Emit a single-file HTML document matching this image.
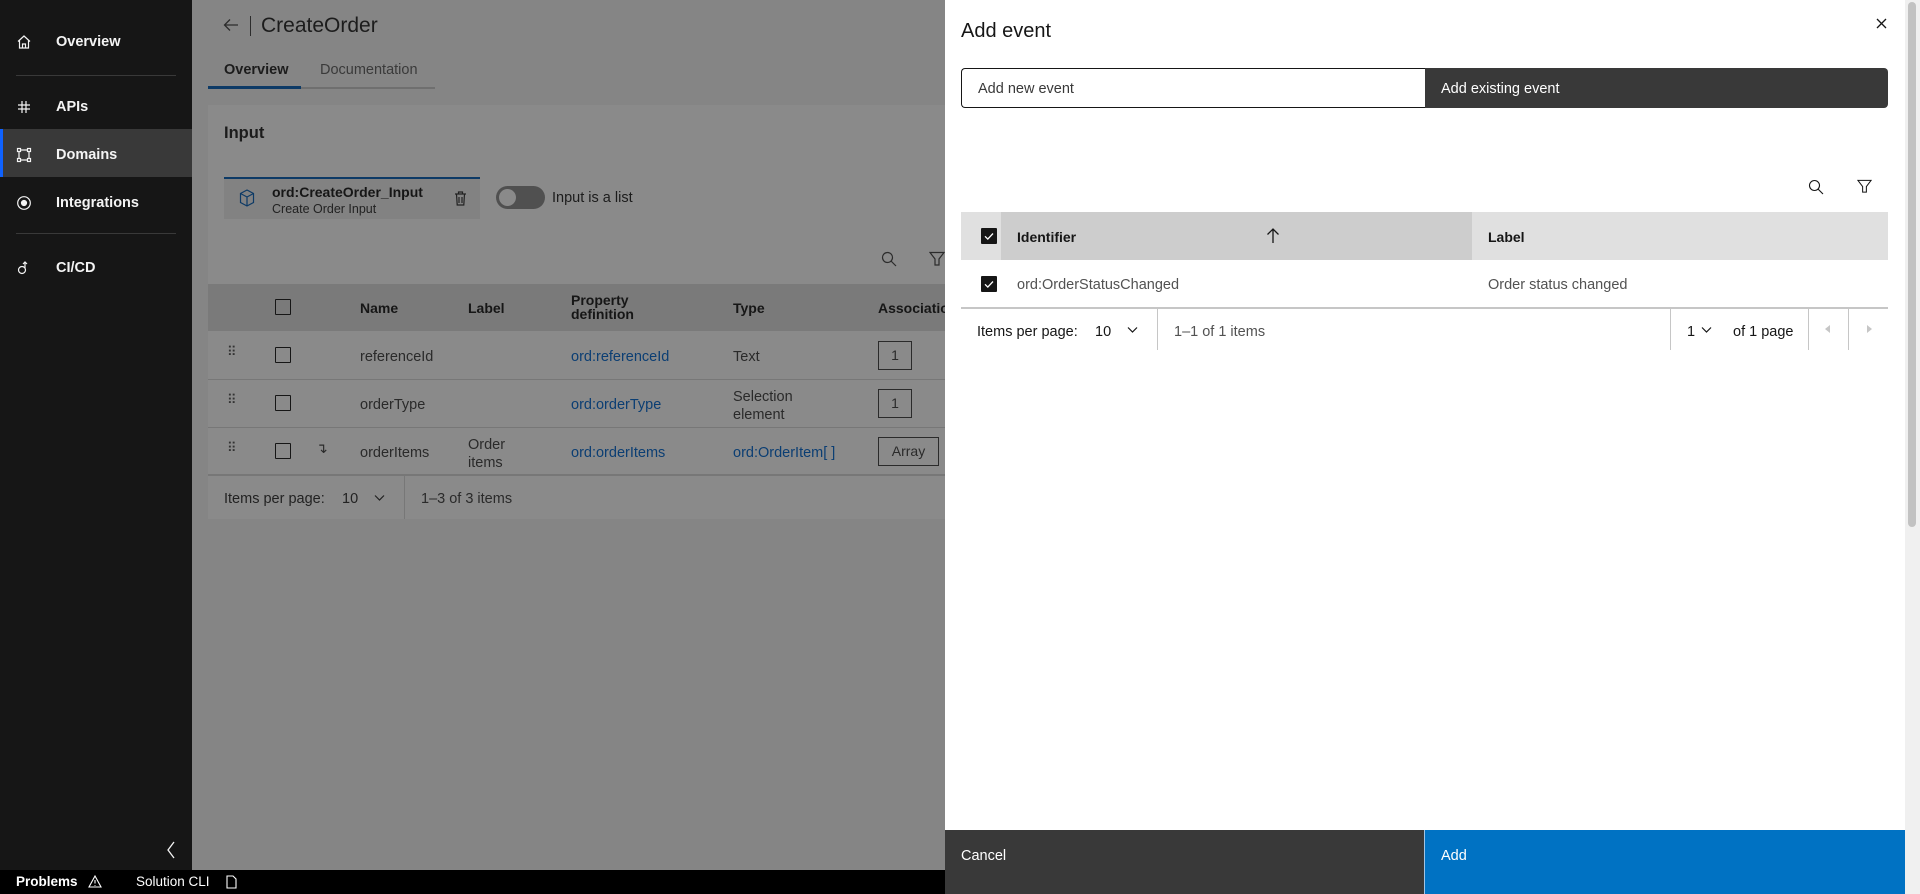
<!DOCTYPE html>
<html><head><meta charset="utf-8"><style>
*{box-sizing:border-box;margin:0;padding:0}
body{width:1920px;height:894px;overflow:hidden;font-family:"Liberation Sans",sans-serif;position:relative;background:#858585;color:#161616}
.abs{position:absolute}
.side{left:0;top:0;width:192px;height:870px;background:#161616;color:#f4f4f4}
.nav{position:absolute;left:0;width:192px;height:48px;display:flex;align-items:center;font-size:14.5px;font-weight:bold;padding-left:56px}
.nav svg{position:absolute;left:16px}
.div{position:absolute;left:16px;width:160px;height:1px;background:#393939}
.t{position:absolute;white-space:nowrap}
.status{left:0;top:870px;width:945px;height:24px;background:#000;color:#fff;font-size:13.5px}
.cb{position:absolute;width:16px;height:16px;border:1.5px solid #161616;border-radius:1px}
.cbk{position:absolute;width:16px;height:16px;background:#161616;border-radius:1px}
.link{color:#0b3e73}
.drawer{left:945px;top:0;width:960px;height:894px;background:#fff}
.vd{position:absolute;width:1px;background:#c6c6c6}
</style></head><body>
<div class="abs side">
 <div class="nav" style="top:18px"><svg width="16" height="16" viewBox="0 0 16 16" fill="none" stroke="#f4f4f4" stroke-width="1.2"><path d="M2 7.5L8 2l6 5.5M3.5 6.5V14h9V6.5M6.5 14V10h3v4"/></svg>Overview</div>
 <div class="div" style="top:75px"></div>
 <div class="nav" style="top:83px"><svg width="16" height="16" viewBox="0 0 16 16" fill="none" stroke="#f4f4f4" stroke-width="1.2"><path d="M6 2v12M10 2v12M2 6h12M2 10h12"/></svg>APIs</div>
 <div class="nav" style="top:129px;background:#393939;border-left:3px solid #0f62fe;padding-left:53px;padding-top:3px"><svg width="16" height="16" viewBox="0 0 16 16" fill="none" stroke="#f4f4f4" stroke-width="1.2" style="left:13px"><rect x="1.5" y="1.5" width="3" height="3"/><rect x="11.5" y="1.5" width="3" height="3"/><rect x="1.5" y="11.5" width="3" height="3"/><rect x="11.5" y="11.5" width="3" height="3"/><path d="M4.5 3h7M4.5 13h7M3 4.5v7M13 4.5v7"/></svg>Domains</div>
 <div class="nav" style="top:179px"><svg width="16" height="16" viewBox="0 0 16 16" fill="none" stroke="#f4f4f4" stroke-width="1.2"><circle cx="8" cy="8" r="6.3"/><circle cx="8" cy="8" r="2.5" fill="#f4f4f4"/></svg>Integrations</div>
 <div class="div" style="top:233px"></div>
 <div class="nav" style="top:244px"><svg width="16" height="16" viewBox="0 0 16 16" fill="none" stroke="#f4f4f4" stroke-width="1.2"><circle cx="6" cy="10" r="3.5"/><path d="M9 8V2M7 4l2-2 2 2"/></svg>CI/CD</div>
 <svg class="abs" style="left:165px;top:841px" width="12" height="18" viewBox="0 0 12 18" fill="none" stroke="#f4f4f4" stroke-width="1.3"><path d="M9 1L3 9l6 8"/></svg>
</div>
<div class="abs status">
 <span class="t" style="left:16px;top:4px;font-weight:bold">Problems</span>
 <svg class="abs" style="left:88px;top:5px" width="14" height="13" viewBox="0 0 14 13" fill="none" stroke="#fff" stroke-width="1.1"><path d="M7 1L1 12h12z M7 5v3.5M7 10v.8"/></svg>
 <span class="t" style="left:136px;top:4px">Solution CLI</span>
 <svg class="abs" style="left:226px;top:5px" width="11" height="14" viewBox="0 0 11 14" fill="none" stroke="#fff" stroke-width="1.1"><path d="M1 1h6l3 3v9H1z"/></svg>
</div>
<svg class="abs" style="left:223px;top:18px" width="16" height="14" viewBox="0 0 16 14" fill="none" stroke="#2c2c2c" stroke-width="1.3"><path d="M15 7H2M7 1.5L1.5 7 7 12.5"/></svg>
<div class="abs" style="left:250px;top:16px;width:1px;height:20px;background:#2c2c2c"></div>
<div class="t" style="left:261px;top:14px;font-size:21px;color:#1c1c1c">CreateOrder</div>
<div class="t" style="left:224px;top:62px;font-size:14.5px;font-weight:bold;color:#1c1c1c">Overview</div>
<div class="t" style="left:320px;top:62px;font-size:14.5px;color:#3a3a3a">Documentation</div>
<div class="abs" style="left:208px;top:86px;width:93px;height:3px;background:#0d3a66"></div>
<div class="abs" style="left:301px;top:87px;width:134px;height:2px;background:#6f6f6f"></div>
<div class="abs" style="left:208px;top:105px;width:737px;height:414px;background:#8a8a8a"></div>
<div class="t" style="left:224px;top:124px;font-size:16.5px;font-weight:bold;color:#1c1c1c">Input</div>
<div class="abs" style="left:224px;top:177px;width:256px;height:42px;background:#828282;border-top:2px solid #0d3a66"></div>
<svg class="abs" style="left:239px;top:189px" width="16" height="18" viewBox="0 0 16 18" fill="none" stroke="#0d3a66" stroke-width="1.2"><path d="M8 1l6.5 3.5v9L8 17l-6.5-3.5v-9z M1.5 4.5L8 8l6.5-3.5M8 8v9"/></svg>
<div class="t" style="left:272px;top:184px;font-size:14px;font-weight:bold;color:#161616">ord:CreateOrder_Input</div>
<div class="t" style="left:272px;top:202px;font-size:12.5px;color:#222">Create Order Input</div>
<svg class="abs" style="left:454px;top:191px" width="13" height="15" viewBox="0 0 13 15" fill="none" stroke="#222" stroke-width="1.2"><path d="M1 3h11M4.5 3V1h4v2M2.5 3l.7 11h6.6l.7-11M5 6v6M8 6v6"/></svg>
<div class="abs" style="left:496px;top:186px;width:49px;height:23px;border-radius:12px;background:#505050"></div>
<div class="abs" style="left:499px;top:189px;width:17px;height:17px;border-radius:50%;background:#8a8a8a"></div>
<div class="t" style="left:552px;top:190px;font-size:14.5px;color:#1c1c1c">Input is a list</div>
<svg class="abs" style="left:881px;top:251px" width="16" height="16" viewBox="0 0 16 16" fill="none" stroke="#2c2c2c" stroke-width="1.2"><circle cx="6.5" cy="6.5" r="5"/><path d="M10 10l5 5"/></svg>
<svg class="abs" style="left:929px;top:251px" width="16" height="16" viewBox="0 0 16 16" fill="none" stroke="#2c2c2c" stroke-width="1.2"><path d="M1 1.5h14L10 8v6H6V8z"/></svg>
<div class="abs" style="left:208px;top:284px;width:737px;height:47px;background:#7a7a7a"></div>
<div class="cb" style="left:275px;top:299px"></div>
<div class="t" style="left:360px;top:300px;font-size:14px;font-weight:bold">Name</div>
<div class="t" style="left:468px;top:300px;font-size:14px;font-weight:bold">Label</div>
<div class="t" style="left:571px;top:293px;font-size:14px;font-weight:bold;line-height:14px">Property<br>definition</div>
<div class="t" style="left:733px;top:300px;font-size:14px;font-weight:bold">Type</div>
<div class="t" style="left:878px;top:300px;font-size:14px;font-weight:bold">Associatio</div>
<div class="abs" style="left:208px;top:379px;width:737px;height:1px;background:#777"></div>
<div class="abs" style="left:208px;top:427px;width:737px;height:1px;background:#777"></div>
<div class="abs" style="left:208px;top:474px;width:737px;height:2px;background:#777"></div>
<div class="t" style="left:227px;top:344px;font-size:13px;color:#333;letter-spacing:-1px">⠿</div>
<div class="cb" style="left:275px;top:347px"></div>
<div class="t" style="left:360px;top:349px;font-size:14.5px;color:#2a2a2a">referenceId</div>
<div class="t link" style="left:571px;top:349px;font-size:14.5px">ord:referenceId</div>
<div class="t" style="left:733px;top:349px;font-size:14.5px;color:#2a2a2a">Text</div>
<div class="abs" style="left:878px;top:341px;width:34px;height:29px;border:1.5px solid #2a2a2a;font-size:14px;color:#2a2a2a;text-align:center;line-height:26px">1</div>
<div class="t" style="left:227px;top:392px;font-size:13px;color:#333">⠿</div>
<div class="cb" style="left:275px;top:395px"></div>
<div class="t" style="left:360px;top:397px;font-size:14.5px;color:#2a2a2a">orderType</div>
<div class="t link" style="left:571px;top:397px;font-size:14.5px">ord:orderType</div>
<div class="t" style="left:733px;top:388px;font-size:14.5px;color:#2a2a2a;line-height:18px">Selection<br>element</div>
<div class="abs" style="left:878px;top:389px;width:34px;height:29px;border:1.5px solid #2a2a2a;font-size:14px;color:#2a2a2a;text-align:center;line-height:26px">1</div>
<div class="t" style="left:227px;top:440px;font-size:13px;color:#333">⠿</div>
<div class="cb" style="left:275px;top:443px"></div>
<div class="t" style="left:316px;top:440px;font-size:14px;color:#2a2a2a">↴</div>
<div class="t" style="left:360px;top:445px;font-size:14.5px;color:#2a2a2a">orderItems</div>
<div class="t" style="left:468px;top:436px;font-size:14.5px;color:#2a2a2a;line-height:18px">Order<br>items</div>
<div class="t link" style="left:571px;top:445px;font-size:14.5px">ord:orderItems</div>
<div class="t link" style="left:733px;top:445px;font-size:14.5px">ord:OrderItem[ ]</div>
<div class="abs" style="left:878px;top:437px;width:61px;height:29px;border:1.5px solid #2a2a2a;font-size:14px;color:#2a2a2a;text-align:center;line-height:26px">Array</div>
<div class="t" style="left:224px;top:491px;font-size:14.5px;color:#222">Items per page:</div>
<div class="t" style="left:342px;top:491px;font-size:14.5px;color:#222">10</div>
<svg class="abs" style="left:374px;top:494px" width="11" height="8" viewBox="0 0 11 8" fill="none" stroke="#222" stroke-width="1.2"><path d="M1 1.5l4.5 4.5L10 1.5"/></svg>
<div class="abs" style="left:404px;top:476px;width:1px;height:43px;background:#777"></div>
<div class="t" style="left:421px;top:491px;font-size:14.5px;color:#2a2a2a">1–3 of 3 items</div>
<div class="abs drawer">
 <div class="t" style="left:16px;top:20px;font-size:20px;color:#161616">Add event</div>
 <svg class="abs" style="left:931px;top:18px" width="11" height="11" viewBox="0 0 11 11" stroke="#161616" stroke-width="1.3"><path d="M1 1l9 9M10 1l-9 9"/></svg>
 <div class="abs" style="left:16px;top:68px;width:465px;height:40px;border:1.5px solid #161616;border-right:none;border-radius:4px 0 0 4px;font-size:14.5px;color:#393939;padding:12px 0 0 16px">Add new event</div>
 <div class="abs" style="left:480px;top:68px;width:463px;height:40px;background:#393939;border-radius:0 4px 4px 0;font-size:14.5px;color:#fff;padding:13px 0 0 16px">Add existing event</div>
 <svg class="abs" style="left:863px;top:179px" width="16" height="16" viewBox="0 0 16 16" fill="none" stroke="#161616" stroke-width="1.1"><circle cx="6.5" cy="6.5" r="5"/><path d="M10 10l5 5"/></svg>
 <svg class="abs" style="left:912px;top:179px" width="15" height="15" viewBox="0 0 16 16" fill="none" stroke="#161616" stroke-width="1.1"><path d="M1 1.5h14L10 8v6H6V8z"/></svg>
 <div class="abs" style="left:16px;top:212px;width:927px;height:48px;background:#e0e0e0"></div>
 <div class="abs" style="left:56px;top:212px;width:471px;height:48px;background:#cdcdcd"></div>
 <div class="cbk" style="left:36px;top:228px"><svg width="16" height="16" viewBox="0 0 16 16" fill="none" stroke="#fff" stroke-width="1.3"><path d="M4 8.3l2.8 2.8L12 5.5"/></svg></div>
 <div class="t" style="left:72px;top:229px;font-size:14px;font-weight:bold">Identifier</div>
 <svg class="abs" style="left:321px;top:227px" width="14" height="17" viewBox="0 0 14 17" fill="none" stroke="#161616" stroke-width="1.3"><path d="M7 16V2M1.5 7.5L7 2l5.5 5.5"/></svg>
 <div class="t" style="left:543px;top:229px;font-size:14px;font-weight:bold">Label</div>
 <div class="cbk" style="left:36px;top:276px"><svg width="16" height="16" viewBox="0 0 16 16" fill="none" stroke="#fff" stroke-width="1.3"><path d="M4 8.3l2.8 2.8L12 5.5"/></svg></div>
 <div class="t" style="left:72px;top:277px;font-size:14.5px;color:#525252">ord:OrderStatusChanged</div>
 <div class="t" style="left:543px;top:277px;font-size:14.5px;color:#525252">Order status changed</div>
 <div class="abs" style="left:16px;top:307px;width:927px;height:2px;background:#c6c6c6"></div>
 <div class="t" style="left:32px;top:324px;font-size:14.5px;color:#161616">Items per page:</div>
 <div class="t" style="left:150px;top:324px;font-size:14.5px;color:#161616">10</div>
 <svg class="abs" style="left:182px;top:326px" width="11" height="8" viewBox="0 0 11 8" fill="none" stroke="#161616" stroke-width="1.2"><path d="M1 1.5l4.5 4.5L10 1.5"/></svg>
 <div class="vd" style="left:212px;top:309px;height:41px"></div>
 <div class="t" style="left:229px;top:324px;font-size:14.5px;color:#525252">1–1 of 1 items</div>
 <div class="vd" style="left:725px;top:309px;height:41px"></div>
 <div class="t" style="left:742px;top:324px;font-size:14.5px;color:#161616">1</div>
 <svg class="abs" style="left:756px;top:326px" width="11" height="8" viewBox="0 0 11 8" fill="none" stroke="#161616" stroke-width="1.2"><path d="M1 1.5l4.5 4.5L10 1.5"/></svg>
 <div class="t" style="left:788px;top:324px;font-size:14.5px;color:#161616">of 1 page</div>
 <div class="vd" style="left:863px;top:309px;height:41px"></div>
 <div class="vd" style="left:903px;top:309px;height:41px"></div>
 <svg class="abs" style="left:880px;top:325px" width="6" height="8" viewBox="0 0 6 8"><path d="M5 0v8L0 4z" fill="#c6c6c6"/></svg>
 <svg class="abs" style="left:922px;top:325px" width="6" height="8" viewBox="0 0 6 8"><path d="M0 0v8l5-4z" fill="#c6c6c6"/></svg>
 <div class="abs" style="left:0;top:830px;width:479px;height:64px;background:#393939;color:#fff;font-size:14.5px;padding:18px 0 0 16px">Cancel</div>
 <div class="abs" style="left:479px;top:830px;width:481px;height:64px;background:#0072c3;color:#fff;font-size:14.5px;padding:18px 0 0 16px;border-left:1px solid #a0c4e4">Add</div>
</div>
<div class="abs" style="left:1905px;top:0;width:15px;height:894px;background:#f0f0f0"></div>
<div class="abs" style="left:1908px;top:2px;width:8px;height:525px;background:#c2c2c2;border-radius:4px"></div>
</body></html>
